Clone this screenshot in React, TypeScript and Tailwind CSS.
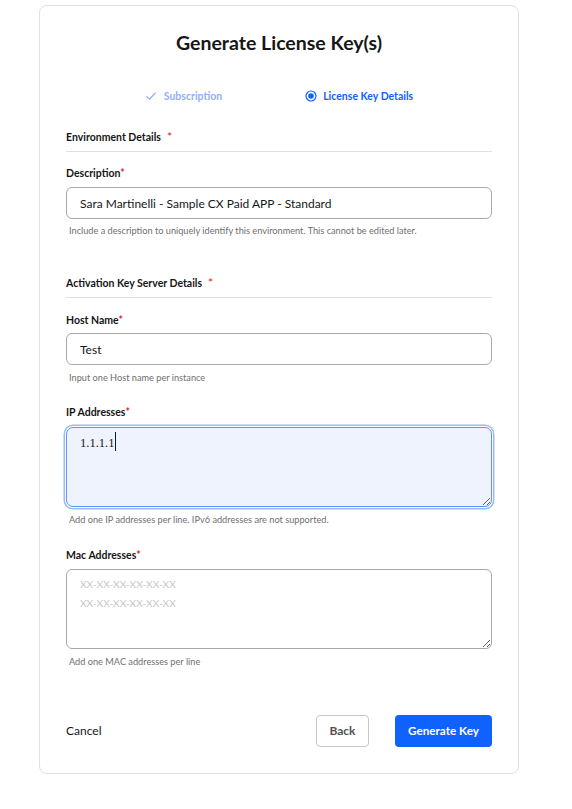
import React from "react";

const Req = () => <span className="text-[#da1e28]">*</span>;

const Helper = ({ children, className = "" }: { children: React.ReactNode; className?: string }) => (
  <p className={`text-[9.2px] leading-[14px] text-[#6f6f6f] pl-[3px] ${className}`}>{children}</p>
);

const Label = ({ children, className = "" }: { children: React.ReactNode; className?: string }) => (
  <label className={`block text-[10.5px] leading-[16px] font-bold text-[#161616] ${className}`}>
    {children}
    <Req />
  </label>
);

const SectionHead = ({ title, className = "" }: { title: string; className?: string }) => (
  <div className={`border-b border-[#e0e0e0] pb-[6px] text-[10.5px] leading-[16px] ${className}`}>
    <span className="font-bold text-[#161616]">{title}</span>
    <span className="ml-[6px] text-[12px] text-[#da1e28]">*</span>
  </div>
);

export default function App() {
  return (
    <div className="min-h-screen bg-white pt-[5px] pl-[39px]" style={{ fontFamily: "Lato, 'Noto Sans', sans-serif" }}>
      <div className="w-[480px] rounded-[8px] border border-[#e0e0e0] pt-[23px] px-[26px] pb-[26px]">
        {/* Title */}
        <h1 className="text-center text-[19.5px] leading-[28px] font-bold text-[#161616]">Generate License Key(s)</h1>

        {/* Steps */}
        <div className="mt-[31px] flex justify-center gap-[83px] text-[10.5px] leading-[16px] font-bold">
          <div className="flex items-center gap-[7px] text-[#8eb1f8]">
            <svg width="12" height="12" viewBox="0 0 12 12" fill="none">
              <path d="M1.5 6.5 L4.5 9.2 L10.5 2.8" stroke="#8eb1f8" strokeWidth="1.3" />
            </svg>
            <span>Subscription</span>
          </div>
          <div className="flex items-center gap-[6px] text-[#0f62fe]">
            <svg width="12" height="12" viewBox="0 0 12 12" fill="none">
              <circle cx="6" cy="6" r="5" stroke="#0f62fe" strokeWidth="1.2" />
              <circle cx="6" cy="6" r="2.8" fill="#0f62fe" />
            </svg>
            <span>License Key Details</span>
          </div>
        </div>

        {/* Environment details */}
        <SectionHead title="Environment Details" className="mt-[25px]" />
        <Label className="mt-[13px]">Description</Label>
        <input
          readOnly
          value="Sara Martinelli - Sample CX Paid APP - Standard"
          className="mt-[6px] block w-full h-[32px] rounded-[6px] border border-[#a8a8a8] px-[13px] text-[12px] text-[#161616] outline-none"
        />
        <Helper className="mt-[5px]">Include a description to uniquely identify this environment. This cannot be edited later.</Helper>

        {/* Activation key server details */}
        <SectionHead title="Activation Key Server Details" className="mt-[37px]" />
        <Label className="mt-[14px]">Host Name</Label>
        <input
          readOnly
          value="Test"
          className="mt-[5px] block w-full h-[32px] rounded-[6px] border border-[#a8a8a8] px-[13px] text-[12px] text-[#161616] outline-none"
        />
        <Helper className="mt-[6px]">Input one Host name per instance</Helper>

        <Label className="mt-[19px]">IP Addresses</Label>
        <div className="relative mt-[7px]">
          <textarea
            readOnly
            defaultValue="1.1.1.1"
            className="block w-full h-[80px] rounded-[7px] border border-[#5c95f5] bg-[#eef3fd] px-[13px] py-[5px] text-[12.5px] leading-[20px] text-[#161616] outline-none shadow-[0_0_0_1px_#ffffff,0_0_0_2.5px_#99bbf7]"
            style={{ fontFamily: "'Liberation Serif', serif" }}
          />
          <span className="absolute left-[49px] top-[5px] h-[19px] w-px bg-[#161616]" />
        </div>
        <Helper className="mt-[6px]">Add one IP addresses per line. IPv6 addresses are not supported.</Helper>

        <Label className="mt-[20px]">Mac Addresses</Label>
        <textarea
          readOnly
          placeholder={"XX-XX-XX-XX-XX-XX\nXX-XX-XX-XX-XX-XX"}
          className="mt-[6px] block w-full h-[80px] rounded-[6px] border border-[#a8a8a8] px-[13px] py-[5px] text-[10.2px] leading-[19px] text-[#161616] placeholder:text-[#c6c6c6] outline-none"
        />
        <Helper className="mt-[6px]">Add one MAC addresses per line</Helper>

        {/* Actions */}
        <div className="mt-[46px] flex items-center">
          <button className="text-[12px] text-[#161616]">Cancel</button>
          <div className="ml-auto flex gap-[26px]">
            <button className="h-[32px] w-[53px] rounded-[4px] border border-[#c6c6d0] text-[12px] font-bold text-[#525252]">Back</button>
            <button className="h-[32px] w-[97px] rounded-[4px] bg-[#0f62fe] text-[11.7px] font-bold text-white">Generate Key</button>
          </div>
        </div>
      </div>
    </div>
  );
}
